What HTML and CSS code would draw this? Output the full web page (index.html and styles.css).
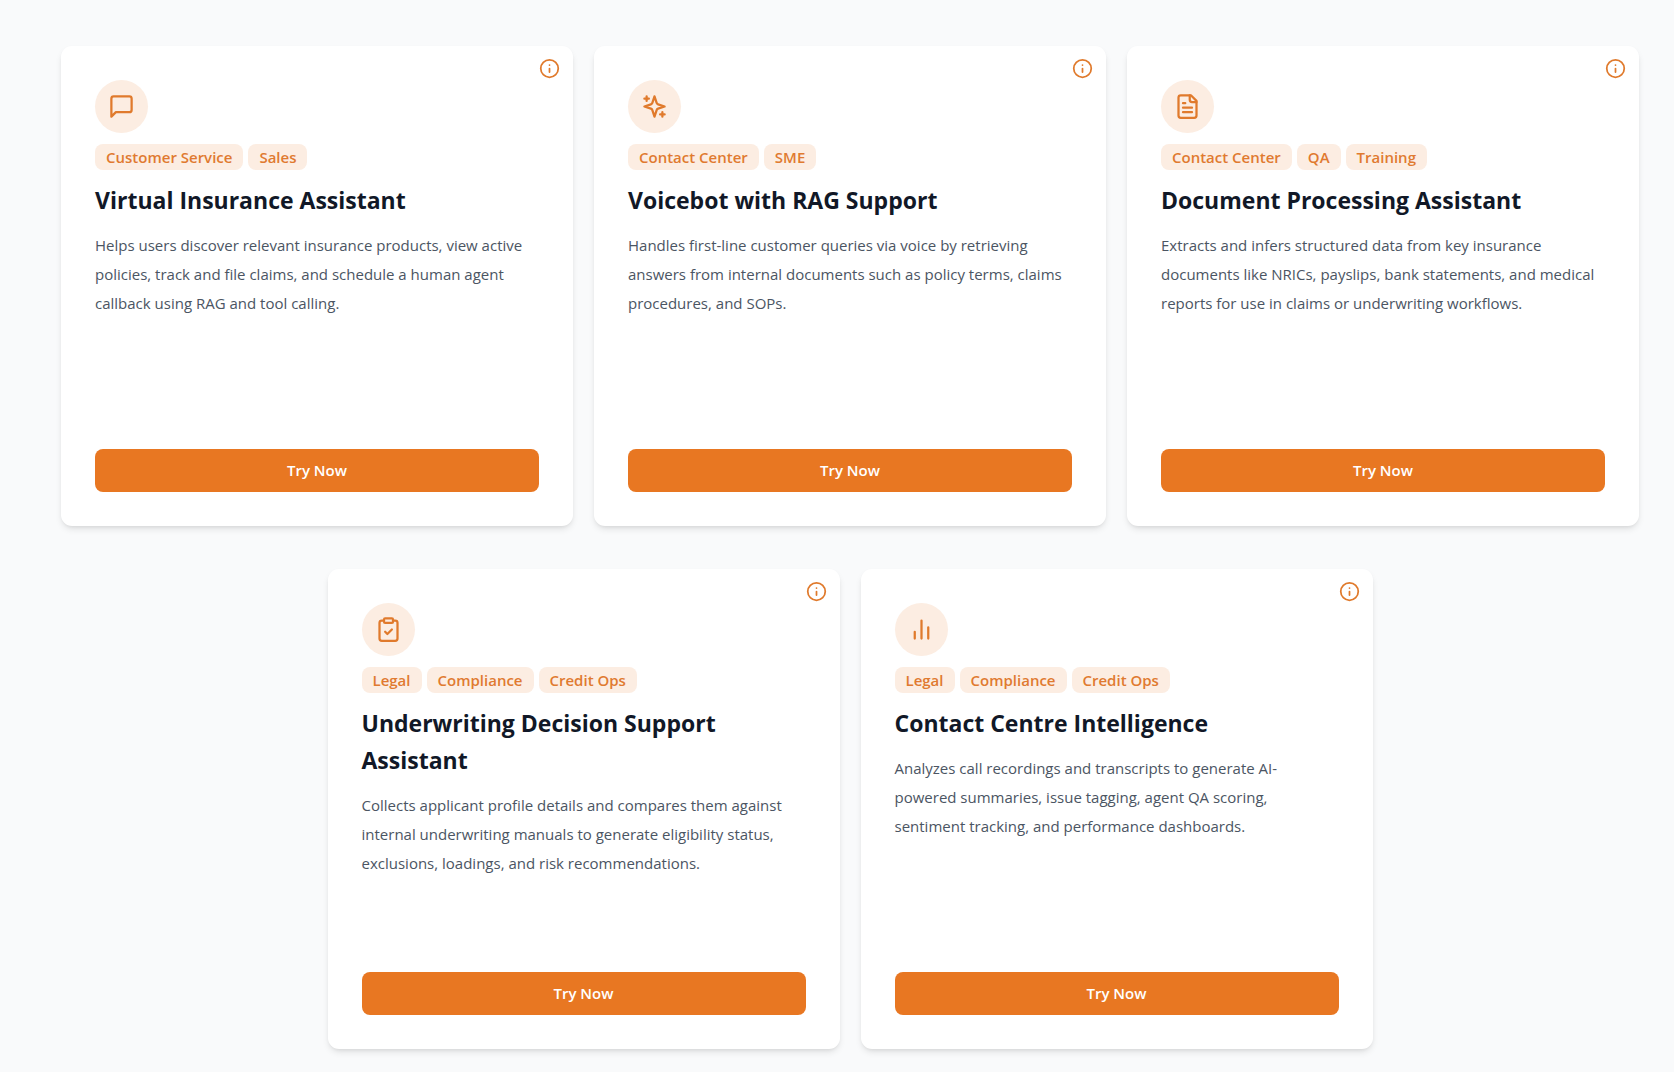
FILE: index.html
```html
<!DOCTYPE html>
<html lang="en">
<head>
  <meta charset="UTF-8" />
  <meta name="viewport" content="width=device-width, initial-scale=1.0"/>
  <title>AI Solutions</title>
  <link rel="stylesheet" href="styles.css">
</head>
<body>

<main class="cards">

  <article class="card">
    <button class="info" aria-label="About Virtual Insurance Assistant">
      <svg viewBox="0 0 24 24"><circle cx="12" cy="12" r="10"/><path d="M12 16v-4M12 8h.01"/></svg>
    </button>
    <div class="icon">
      <svg viewBox="0 0 24 24"><path d="M21 15a2 2 0 0 1-2 2H7l-4 4V5a2 2 0 0 1 2-2h14a2 2 0 0 1 2 2z"/></svg>
    </div>
    <div class="tags">
      <span class="tag">Customer Service</span>
      <span class="tag">Sales</span>
    </div>
    <h2>Virtual Insurance Assistant</h2>
    <p>Helps users discover relevant insurance products, view active policies, track and file claims, and schedule a human agent callback using RAG and tool calling.</p>
    <button class="try">Try Now</button>
  </article>

  <article class="card">
    <button class="info" aria-label="About Voicebot with RAG Support">
      <svg viewBox="0 0 24 24"><circle cx="12" cy="12" r="10"/><path d="M12 16v-4M12 8h.01"/></svg>
    </button>
    <div class="icon">
      <svg viewBox="0 0 24 24"><path d="m12 3-1.912 5.813a2 2 0 0 1-1.275 1.275L3 12l5.813 1.912a2 2 0 0 1 1.275 1.275L12 21l1.912-5.813a2 2 0 0 1 1.275-1.275L21 12l-5.813-1.912a2 2 0 0 1-1.275-1.275L12 3Z"/><path d="M5 3v4M19 17v4M3 5h4M17 19h4"/></svg>
    </div>
    <div class="tags">
      <span class="tag">Contact Center</span>
      <span class="tag">SME</span>
    </div>
    <h2>Voicebot with RAG Support</h2>
    <p>Handles first-line customer queries via voice by retrieving answers from internal documents such as policy terms, claims procedures, and SOPs.</p>
    <button class="try">Try Now</button>
  </article>

  <article class="card">
    <button class="info" aria-label="About Document Processing Assistant">
      <svg viewBox="0 0 24 24"><circle cx="12" cy="12" r="10"/><path d="M12 16v-4M12 8h.01"/></svg>
    </button>
    <div class="icon">
      <svg viewBox="0 0 24 24"><path d="M15 2H6a2 2 0 0 0-2 2v16a2 2 0 0 0 2 2h12a2 2 0 0 0 2-2V7Z"/><path d="M14 2v4a2 2 0 0 0 2 2h4"/><path d="M10 9H8M16 13H8M16 17H8"/></svg>
    </div>
    <div class="tags">
      <span class="tag">Contact Center</span>
      <span class="tag">QA</span>
      <span class="tag">Training</span>
    </div>
    <h2>Document Processing Assistant</h2>
    <p>Extracts and infers structured data from key insurance documents like NRICs, payslips, bank statements, and medical reports for use in claims or underwriting workflows.</p>
    <button class="try">Try Now</button>
  </article>

  <article class="card">
    <button class="info" aria-label="About Underwriting Decision Support Assistant">
      <svg viewBox="0 0 24 24"><circle cx="12" cy="12" r="10"/><path d="M12 16v-4M12 8h.01"/></svg>
    </button>
    <div class="icon">
      <svg viewBox="0 0 24 24"><rect x="8" y="2" width="8" height="4" rx="1"/><path d="M16 4h2a2 2 0 0 1 2 2v14a2 2 0 0 1-2 2H6a2 2 0 0 1-2-2V6a2 2 0 0 1 2-2h2"/><path d="m9 14 2 2 4-4"/></svg>
    </div>
    <div class="tags">
      <span class="tag">Legal</span>
      <span class="tag">Compliance</span>
      <span class="tag">Credit Ops</span>
    </div>
    <h2>Underwriting Decision Support Assistant</h2>
    <p>Collects applicant profile details and compares them against internal underwriting manuals to generate eligibility status, exclusions, loadings, and risk recommendations.</p>
    <button class="try">Try Now</button>
  </article>

  <article class="card">
    <button class="info" aria-label="About Contact Centre Intelligence">
      <svg viewBox="0 0 24 24"><circle cx="12" cy="12" r="10"/><path d="M12 16v-4M12 8h.01"/></svg>
    </button>
    <div class="icon">
      <svg viewBox="0 0 24 24"><path d="M18 20V10M12 20V4M6 20v-6"/></svg>
    </div>
    <div class="tags">
      <span class="tag">Legal</span>
      <span class="tag">Compliance</span>
      <span class="tag">Credit Ops</span>
    </div>
    <h2>Contact Centre Intelligence</h2>
    <p>Analyzes call recordings and transcripts to generate AI-powered summaries, issue tagging, agent QA scoring, sentiment tracking, and performance dashboards.</p>
    <button class="try">Try Now</button>
  </article>

</main>

</body>
</html>
```
FILE: styles.css
```css
* {
  box-sizing: border-box;
}

body {
  margin: 0;
  background: #f9fafb;
  color: #111827;
  font-family: "Segoe UI", "Open Sans", "Noto Sans", sans-serif;
}

.cards {
  display: flex;
  flex-wrap: wrap;
  justify-content: center;
  gap: 43px 21px;
  padding: 46px 35px 23px 61px;
}

.card {
  position: relative;
  display: flex;
  flex-direction: column;
  width: 512px;
  min-height: 480px;
  padding: 34px;
  background: white;
  border-radius: 11px;
  box-shadow: 0 4px 7px -1px rgba(0,0,0,0.1), 0 2px 4px -2px rgba(0,0,0,0.1);
}

svg {
  display: block;
  fill: none;
  stroke: #e07a2c;
  stroke-width: 2;
  stroke-linecap: round;
  stroke-linejoin: round;
}

.info {
  position: absolute;
  top: 12px;
  right: 13px;
  padding: 0;
  border: none;
  background: none;
  cursor: pointer;
}

.info svg {
  width: 21px;
  height: 21px;
}

.icon {
  display: flex;
  justify-content: center;
  align-items: center;
  width: 53px;
  height: 53px;
  background: #fcede2;
  border-radius: 50%;
}

.icon svg {
  width: 27px;
  height: 27px;
}

.tags {
  display: flex;
  flex-wrap: wrap;
  gap: 5px;
  margin-top: 11px;
}

.tag {
  padding: 0 11px;
  background: #fcede2;
  color: #e07a30;
  border-radius: 8px;
  font-size: 15px;
  font-weight: 600;
  line-height: 26px;
}

h2 {
  margin: 12px 0;
  font-size: 23px;
  font-weight: 700;
  line-height: 37px;
}

p {
  margin: 0;
  color: #4b5563;
  font-size: 15px;
  line-height: 29px;
}

.try {
  height: 43px;
  margin-top: auto;
  padding: 0 0 2px;
  border: none;
  border-radius: 8px;
  background: #e87722;
  color: white;
  font-family: inherit;
  font-size: 15px;
  font-weight: 600;
  cursor: pointer;
}
```
